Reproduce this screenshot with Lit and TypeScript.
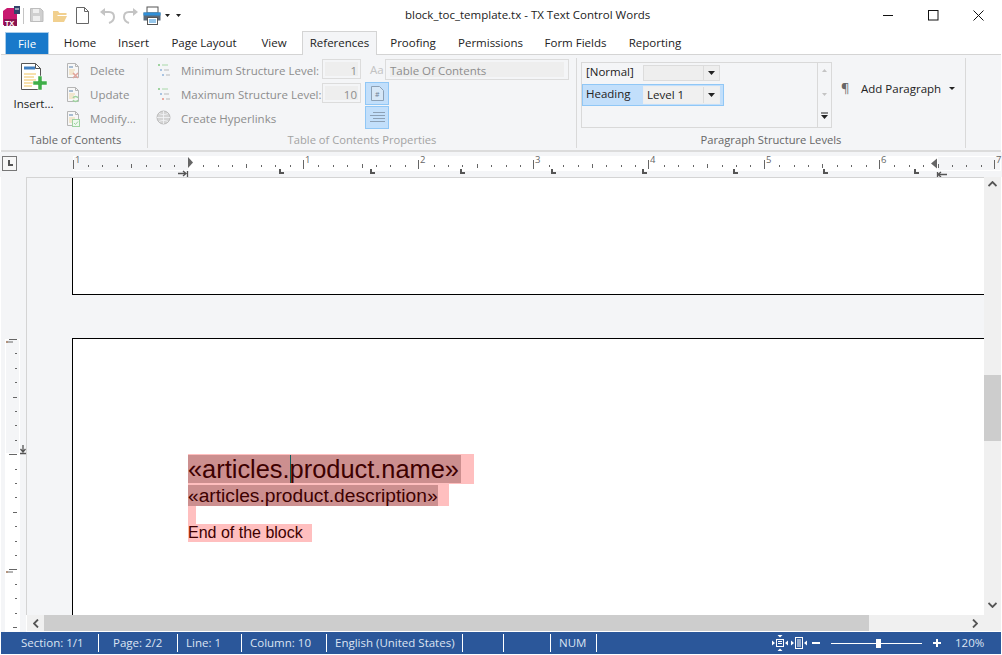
import { LitElement, html, svg, css } from 'lit';
import { customElement } from 'lit/decorators.js';

// name, width, gap before
const TABS: [string, number, number][] = [
  ['Home', 62, 0],
  ['Insert', 45, 0],
  ['Page Layout', 96, 0],
  ['View', 44, 0],
  ['References', 75, 6],
  ['Proofing', 72, 0],
  ['Permissions', 83, 0],
  ['Form Fields', 87, 0],
  ['Reporting', 72, 0],
];
const STATUS: [string, number][] = [
  ['Section: 1/1', 98],
  ['Page: 2/2', 79],
  ['Line: 1', 64],
  ['Column: 10', 85],
  ['English (United States)', 136],
  ['', 41],
  ['', 47],
  ['NUM', 46],
];

// small page icon used by the Delete / Update / Modify buttons
const pageIcon = (badge: unknown) => svg`
  <path d="M1.5 1.5h8l3 3v11h-11z" fill="#f7f7f7" stroke="#b5b5b5"/>
  <path d="M9.5 1.5v3h3" fill="none" stroke="#b5b5b5"/>
  <path d="M3 5h4" stroke="#a9bdd2" stroke-width="2"/>
  <path d="M3 8h6M3 10h5M3 12h6" stroke="#ecd5a5"/>
  ${badge}`;

const levelIcon = (third: string) => html`<svg width="16" height="15" viewBox="0 0 16 15">
  <path d="M2 2h2" stroke="#9fd3a0" stroke-width="2"/><path d="M6 2h6" stroke="#a8d8a8"/>
  <path d="M4 7h2" stroke="#aac4e2" stroke-width="2"/><path d="M8 7h5" stroke="#b9b9b9"/>
  <path d="M6 12h2" stroke="${third}" stroke-width="2"/><path d="M10 12h4" stroke="#b9b9b9"/>
</svg>`;

const caret = html`<svg width="7" height="4" viewBox="0 0 7 4"><path d="M0 0h7L3.5 4z" fill="#222"/></svg>`;

@customElement('app-root')
export class AppRoot extends LitElement {
  static styles = css`
    :host {
      display: flex;
      flex-direction: column;
      width: 1002px;
      height: 655px;
      overflow: hidden;
      background: #fff;
      font-family: "Open Sans", "Noto Sans", sans-serif;
      font-size: 11.5px;
      color: #222;
    }
    svg { display: block; flex: none; }

    .titlebar { display: flex; align-items: center; height: 31px; flex: none; }
    .qat { display: flex; align-items: center; width: 190px; padding-left: 3px; box-sizing: border-box; }
    .title { margin-left: 215px; margin-bottom: 2px; font-size: 11.5px; color: #222; white-space: nowrap; }
    .winctl { margin-left: auto; margin-right: 1px; display: flex; }
    .winbtn { width: 45px; height: 31px; display: flex; align-items: center; justify-content: center; }

    .tabs { display: flex; height: 23px; flex: none; position: relative; padding-left: 5px; }
    .file {
      width: 44px; background: #1979ca; color: #fff; display: flex; align-items: center;
      justify-content: center; margin-top: 1px; height: 22px; box-sizing: border-box;
      border: 1px solid #a9cdea; border-bottom: none;
    }
    .tab { display: flex; align-items: center; justify-content: center; box-sizing: border-box; height: 23px; padding-bottom: 1px; white-space: nowrap; }
    .tab.on {
      background: #f4f5f7; border: 1px solid #d4d4d4; border-bottom: none; height: 24px; padding-bottom: 2px; z-index: 1;
    }

    .ribbon {
      display: flex; height: 98px; flex: none; background: #f4f5f7; box-sizing: border-box;
      border-top: 1px solid #d4d4d4; border-bottom: 2px solid #dcdcdc; margin: 0 1px;
    }
    .group { display: flex; flex-direction: column; border-right: 1px solid #d9d9d9; height: 90px; margin-top: 3px; box-sizing: border-box; }
    .g1 { width: 147px; }
    .g2 { width: 429px; }
    .g3 { width: 389px; }
    .glabel { text-align: center; height: 17px; margin-top: auto; line-height: 17px; color: #666; font-size: 11.2px; }
    .glabel.off { color: #a3a3a3; }
    .g1 .glabel { padding-left: 3px; }
    .gbody { display: flex; flex: 1; min-height: 0; }

    .big { width: 65px; display: flex; flex-direction: column; align-items: center; padding-top: 4px; box-sizing: border-box; }
    .big span { margin-top: 3px; color: #222; }
    .smalls { display: flex; flex-direction: column; }
    .small { display: flex; align-items: center; height: 24px; color: #8d8d8d; white-space: nowrap; }
    .small svg { margin-right: 10px; }

    .g2body { display: grid; grid-template-columns: 166px 39px 4px 24px 180px; padding: 1px 0 0 8px; }
    .lv { display: flex; align-items: center; height: 24px; box-sizing: border-box; padding-bottom: 2px; color: #8d8d8d; white-space: nowrap; }
    .lv svg { margin-right: 9px; }
    .num {
      height: 20px; box-sizing: border-box; border: 1px solid #dcdcdc; padding: 2px; margin-bottom: 4px;
    }
    .num div { background: #eee; height: 100%; text-align: right; color: #8d8d8d; line-height: 18px; padding-right: 1px; }
    .col { display: flex; flex-direction: column; }
    .aa { color: #c2c2c2; height: 20px; line-height: 22px; margin-bottom: 3px; padding-left: 5px; }
    .tog {
      width: 24px; height: 23px; box-sizing: border-box; background: #c2dffb; border: 1px solid #90c7f6;
      display: flex; align-items: center; justify-content: center; margin-bottom: 1px;
    }
    .tocname { height: 21px; box-sizing: border-box; border: 1px solid #dcdcdc; padding: 2px 4px; width: 184px; margin-left: -4px; }
    .tocname div { background: #eee; height: 15px; line-height: 18px; color: #8d8d8d; }

    .g3body { display: flex; padding: 4px 0 0 4px; }
    .list { width: 251px; height: 66px; box-sizing: border-box; border: 1px solid #d9d9d9; display: flex; }
    .rows { flex: 1; padding-top: 2px; }
    .row { display: flex; align-items: center; height: 16px; padding-left: 4px; }
    .row .nm { width: 57px; padding-bottom: 4px; }
    .row.on {
      margin-top: 3px; height: 22px; width: 142px; box-sizing: border-box; background: #c2dffb;
      border: 1px solid #90c7f6; padding-left: 3px;
    }
    .combo { display: flex; width: 77px; height: 16px; box-sizing: border-box; border: 1px solid #dcdcdc; background: #eee; }
    .row.on .combo { border-color: #eee; height: 18px; background: #f0f0f0; }
    .combo .v { flex: 1; padding-left: 3px; line-height: 16px; }
    .combo .b { width: 15px; border-left: 1px solid #dcdcdc; display: flex; align-items: center; justify-content: center; }
    .lscroll { width: 13px; border-left: 1px solid #d9d9d9; display: flex; flex-direction: column; align-items: center; }
    .add { display: flex; align-items: center; height: 52px; margin-left: 9px; }
    .add .p { width: 20px; color: #666; font-size: 13px; }
    .add .a { width: 88px; white-space: nowrap; }

    .hruler { height: 25px; flex: none; background: #f4f5f7; }

    .main { flex: 1; min-height: 0; display: flex; margin: 0 1px; }
    .vruler { width: 25px; background: #f4f5f7; flex: none; }
    .center { flex: 1; min-width: 0; display: flex; flex-direction: column; }
    .docrow { flex: 1; min-height: 0; display: flex; }
    .doc {
      flex: 1; min-width: 0; overflow: hidden; background: #f4f5f7;
      border-top: 1px solid #d4d4d4; border-left: 1px solid #d4d4d4; padding-left: 45px;
    }
    .page { background: #fff; border: 1px solid #000; border-right: none; box-sizing: border-box; }
    .p1 { height: 117px; border-top: none; }
    .p2 { height: 400px; margin-top: 43px; padding: 115px 0 0 115px; }
    .line { display: block; width: max-content; background: #ffbfbf; font-family: "Liberation Sans", Arial, sans-serif; color: #3d0000; white-space: nowrap; }
    .line .sel { display: block; background: #cc8f8f; }
    .l1 { font-size: 25.4px; height: 30px; padding: 1px 13px 1px 0; box-sizing: border-box; }
    .l1 .sel { height: 28px; line-height: 27px; padding-right: 2px; }
    .l2 { font-size: 19.2px; height: 22px; padding: 1px 11px 0 0; box-sizing: border-box; }
    .l2 .sel { height: 21px; line-height: 21px; }
    .l3 { height: 18px; width: 8px; }
    .l4 { font-size: 16px; line-height: 18px; height: 18px; padding-right: 9px; }
    .cursor { display: inline-block; width: 1px; height: 28px; margin-right: -1px; background: #0f5f5f; vertical-align: bottom; }

    .vscroll { width: 17px; flex: none; background: #f0f0f0; display: flex; flex-direction: column; align-items: center; padding-top: 4px; box-sizing: border-box; }
    .vthumb { width: 17px; height: 66px; background: #cdcdcd; margin: 188px 0 161px; flex: none; }
    .hscroll { height: 16px; flex: none; background: #f0f0f0; display: flex; align-items: center; margin-left: 1px; margin-bottom: 1px; }
    .hthumb { width: 825px; height: 16px; background: #cdcdcd; }
    .harrow { display: flex; align-items: center; justify-content: center; flex: none; height: 16px; }
    .harrow.l { width: 17px; }
    .harrow.r { width: 115px; justify-content: flex-end; padding-right: 6px; box-sizing: border-box; }

    .status {
      height: 22px; flex: none; background: #2b579a; color: #dbe4f2; display: flex; align-items: center;
      margin: 0 1px 1px;
    }
    .cell { box-sizing: border-box; height: 18px; line-height: 18px; border-right: 1px solid #fff; padding-left: 8px; white-space: nowrap; }
    .cell:nth-child(1) { padding-left: 20px; }
    .cell:nth-child(2) { padding-left: 14px; }
    .zoom { display: flex; align-items: center; margin-left: 175px; }
    .track { width: 91px; height: 1px; background: #fff; margin: 0 11px; position: relative; }
    .thumb { position: absolute; left: 45px; top: -4px; width: 5px; height: 9px; background: #fff; }
    .pct { margin-left: 14px; padding-bottom: 2px; }
  `;

  private renderHRuler() {
    const ticks = [];
    for (let i = -8; i < 56; i++) {
      const x = 188.7 + i * 14.4;
      if (x < 75 || x > 1000) continue;
      if (i % 8 === 0) continue;
      const h = i % 4 === 0 ? 4 : 2;
      ticks.push(svg`<rect x="${Math.round(x)}" y="${14 - h / 2}" width="1" height="${h}" fill="#666"/>`);
    }
    const inches: [number, string][] = [[74, '1'], [304, '1'], [419, '2'], [534, '3'], [649, '4'], [765, '5'], [880, '6'], [995, '7']];
    const tabs = [280, 371, 461, 552, 643, 734, 824, 915];
    return html`<div class="hruler"><svg width="1002" height="25" viewBox="0 0 1002 25">
      <rect x="2.5" y="4.5" width="14" height="14" fill="#f7f7f7" stroke="#777"/>
      <path d="M8 8v6h5v-2H10V8z" fill="#555"/>
      <rect x="73" y="4" width="928" height="15" fill="#fff"/>
      <rect x="74" y="5" width="114" height="13" fill="#f4f5f7"/>
      <rect x="938" y="5" width="62" height="13" fill="#f4f5f7"/>
      ${ticks}
      ${inches.map(([x, t]) => svg`<rect x="${x - 1}" y="8" width="1" height="9" fill="#666"/>
        <text x="${x + 1}" y="11" font-family="Open Sans" font-size="9.5" fill="#666">${t}</text>`)}
      ${tabs.map((x) => svg`<path d="M${x - 1} 17h2v3h3v2h-5z" fill="#555"/>`)}
      <path d="M188 5l5 5.500-5 5.500z" fill="#666"/>
      <path d="M178 21.500h7M183 19l3 2.500-3 2.500M187.500 19v6" fill="none" stroke="#555" stroke-width="1.300"/>
      <path d="M937 6.500l-6 5 6 5z" fill="#666"/>
      <path d="M947 22.500h-8M941 20l-3 2.500 3 2.500M937.500 20v6" fill="none" stroke="#555" stroke-width="1.300"/>
    </svg></div>`;
  }

  private renderVRuler() {
    const ticks = [];
    for (let i = 0; i < 21; i++) {
      const y = 162 + i * 14.4;
      const w = i % 8 === 0 ? 8 : i % 4 === 0 ? 4 : 2;
      ticks.push(svg`<rect x="${16 - w}" y="${Math.round(y)}" width="${w}" height="1" fill="#666"/>`);
    }
    return html`<div class="vruler"><svg width="25" height="455" viewBox="0 0 25 455">
      <rect x="4" y="162" width="15" height="293" fill="#fff"/>
      <rect x="5" y="163" width="13" height="113" fill="#f4f5f7"/>
      ${ticks}
      <path d="M5 165h7" stroke="#666"/><path d="M5 165h2" stroke="#b5794a"/>
      <path d="M5 395h7" stroke="#666"/><path d="M5 395h2" stroke="#b5794a"/>
      <path d="M22 268v7M19.500 272l2.500 3 2.500-3M19 276.500h6" fill="none" stroke="#555" stroke-width="1.300"/>
    </svg></div>`;
  }

  render() {
    return html`
      <div class="titlebar">
        <div class="qat">
          <svg width="184" height="22" viewBox="0 0 184 22">
            <path d="M0 6l4-3h10v17H0z" fill="#c8186f"/>
            <rect x="11" y="1" width="6" height="8" fill="#33446b"/>
            <path d="M12 4h4" stroke="#fff"/>
            <rect x="1" y="14" width="13" height="7" fill="#8a1450"/>
            <text x="2" y="20.5" font-family="Open Sans" font-size="7.5" font-weight="700" fill="#fff">TX</text>
            <path d="M20.500 3v16" stroke="#c4c4c4"/>
            <path d="M27.500 3.500h10l2.500 2.500v10.500h-12.500z" fill="#cfcfcf" stroke="#bdbdbd"/>
            <rect x="30" y="4" width="6" height="4" fill="#eee"/><rect x="30" y="11" width="7" height="5" fill="#eee"/>
            <path d="M50 17V6h5l1.500 2h7v2H55l-1 1h10l-3 6z" fill="#f1d08f"/>
            <path d="M73.500 2.500h8l4 4v12h-12z" fill="#fff" stroke="#666"/>
            <path d="M81.500 2.500v4h4" fill="none" stroke="#666"/>
            <path d="M101 7h5c3.500 0 5 2.500 5 5s-2 5-5 6" fill="none" stroke="#c4c4c4" stroke-width="2"/>
            <path d="M97 7l5-4v8z" fill="#c4c4c4"/>
            <path d="M131 7h-5c-3.500 0-5 2.500-5 5s2 5 5 6" fill="none" stroke="#c4c4c4" stroke-width="2"/>
            <path d="M135 7l-5-4v8z" fill="#c4c4c4"/>
            <rect x="144" y="2" width="11" height="6" fill="#fff" stroke="#555"/>
            <rect x="140.500" y="7.500" width="17" height="8" fill="#5b6a7a"/>
            <rect x="140.500" y="7.500" width="17" height="3" fill="#2f8fd8"/>
            <rect x="144.500" y="12.500" width="10" height="7" fill="#fff" stroke="#555"/>
            <path d="M146 15h7M146 17h7" stroke="#2f8fd8"/>
            <path d="M162 9h5l-2.500 3z M173 9h5l-2.500 3z" fill="#222"/>
            <path d="M184.500 3v16" stroke="#c4c4c4"/>
          </svg>
        </div>
        <div class="title">block_toc_template.tx - TX Text Control Words</div>
        <div class="winctl">
          <div class="winbtn"><svg width="11" height="11"><path d="M0 5.500h10" stroke="#111"/></svg></div>
          <div class="winbtn"><svg width="11" height="11"><rect x=".5" y=".5" width="9.500" height="9.500" fill="none" stroke="#111"/></svg></div>
          <div class="winbtn"><svg width="11" height="11"><path d="M.5.500l10 10M10.500.500l-10 10" stroke="#111"/></svg></div>
        </div>
      </div>

      <div class="tabs">
        <div class="file">File</div>
        ${TABS.map(([name, w, gap]) => html`<div class="tab ${name === 'References' ? 'on' : ''}" style="width:${w}px;margin-left:${gap}px">${name}</div>`)}
      </div>

      <div class="ribbon">
        <div class="group g1">
          <div class="gbody">
            <div class="big">
              <svg width="28" height="31" viewBox="0 0 28 31">
                <path d="M1.500 1.500h14l5 5v21h-19z" fill="#fff" stroke="#555"/>
                <path d="M15.500 1.500v5h5" fill="none" stroke="#555"/>
                <path d="M4 6h11" stroke="#3f7fc1" stroke-width="3"/>
                <path d="M4 12h12M4 15h10M4 18h12M4 21h9M4 24h8" stroke="#f0c25d"/>
                <path d="M18 14h4v5h5v4h-5v5h-4v-5h-5v-4h5z" fill="#3fae49" stroke="#fff" stroke-width=".5"/>
              </svg>
              <span>Insert...</span>
            </div>
            <div class="smalls">
              <div class="small"><svg width="14" height="17" viewBox="0 0 14 17">${pageIcon(svg`<path d="M7 11l5 5M12 11l-5 5" stroke="#e0a49c" stroke-width="1.500"/>`)}</svg>Delete</div>
              <div class="small"><svg width="14" height="17" viewBox="0 0 14 17">${pageIcon(svg`<path d="M7 12c1-2 4-2 5 0M12 14c-1 2-4 2-5 0" fill="none" stroke="#9fd3a0" stroke-width="1.500"/>`)}</svg>Update</div>
              <div class="small"><svg width="14" height="17" viewBox="0 0 14 17">${pageIcon(svg`<rect x="6.500" y="9.500" width="7" height="7" fill="#eff8ef" stroke="#9fd3a0"/><path d="M8 13l1.500 1.500L12 11.500" fill="none" stroke="#9fd3a0"/>`)}</svg>Modify...</div>
            </div>
          </div>
          <div class="glabel">Table of Contents</div>
        </div>

        <div class="group g2">
          <div class="g2body gbody">
            <div class="col">
              <div class="lv">${levelIcon('#aac4e2')}Minimum Structure Level:</div>
              <div class="lv">${levelIcon('#eaa9a0')}Maximum Structure Level:</div>
              <div class="lv">
                <svg width="16" height="16" viewBox="0 0 16 16"><circle cx="7.500" cy="7.500" r="6.500" fill="#d4d4d4" stroke="#bcbcbc"/><path d="M1 7.500h13M7.500 1v13M3 3.500c3 1.500 6 1.500 9 0M3 11.500c3-1.500 6-1.500 9 0" fill="none" stroke="#f4f5f7" stroke-width=".8"/></svg>
                Create Hyperlinks
              </div>
            </div>
            <div class="col">
              <div class="num"><div>1</div></div>
              <div class="num"><div>10</div></div>
            </div>
            <div></div>
            <div class="col">
              <div class="aa">Aa</div>
              <div class="tog"><svg width="13" height="15" viewBox="0 0 13 15"><path d="M.5.500h8l4 4v10H.5z" fill="#d6e7f7" stroke="#8ca0b5"/><text x="4" y="11" font-family="Open Sans" font-size="7" fill="#6f8296">#</text></svg></div>
              <div class="tog"><svg width="15" height="11" viewBox="0 0 15 11"><path d="M3 .500h12M0 3.500h15M3 6.500h12M0 9.500h15" stroke="#8ca0b5"/></svg></div>
            </div>
            <div class="tocname"><div>Table Of Contents</div></div>
          </div>
          <div class="glabel off">Table of Contents Properties</div>
        </div>

        <div class="group g3">
          <div class="g3body gbody">
            <div class="list">
              <div class="rows">
                <div class="row"><span class="nm">[Normal]</span>
                  <div class="combo"><div class="v"></div><div class="b">${caret}</div></div></div>
                <div class="row on"><span class="nm">Heading</span>
                  <div class="combo"><div class="v">Level 1</div><div class="b">${caret}</div></div></div>
              </div>
              <div class="lscroll">
                <svg width="9" height="60" viewBox="0 0 9 60">
                  <path d="M2 9l2.500-3L7 9z" fill="#c4c4c4"/>
                  <path d="M2 30l2.500 3L7 30z" fill="#c4c4c4"/>
                  <path d="M1 50h7" stroke="#222"/><path d="M1 52h7l-3.500 4z" fill="#222"/>
                </svg>
              </div>
            </div>
            <div class="add">
              <span class="p">¶</span>
              <span class="a">Add Paragraph</span>
              <svg width="6" height="3" viewBox="0 0 6 3"><path d="M0 0h6L3 3z" fill="#222"/></svg>
            </div>
          </div>
          <div class="glabel">Paragraph Structure Levels</div>
        </div>
      </div>

      ${this.renderHRuler()}

      <div class="main">
        ${this.renderVRuler()}
        <div class="center">
          <div class="docrow">
            <div class="doc">
              <div class="page p1"></div>
              <div class="page p2">
                <div class="line l1"><span class="sel">«articles.<span class="cursor"></span>product.name»</span></div>
                <div class="line l2"><span class="sel">«articles.product.description»</span></div>
                <div class="line l3"></div>
                <div class="line l4">End of the block</div>
              </div>
            </div>
            <div class="vscroll">
              <svg width="9" height="6" viewBox="0 0 9 6"><path d="M.5 5L4.500 1l4 4" fill="none" stroke="#555" stroke-width="1.800"/></svg>
              <div class="vthumb"></div>
              <svg width="9" height="6" viewBox="0 0 9 6"><path d="M.5 1l4 4 4-4" fill="none" stroke="#555" stroke-width="1.800"/></svg>
            </div>
          </div>
          <div class="hscroll">
            <div class="harrow l"><svg width="6" height="9" viewBox="0 0 6 9"><path d="M5 .5L1 4.500l4 4" fill="none" stroke="#555" stroke-width="1.800"/></svg></div>
            <div class="hthumb"></div>
            <div class="harrow r"><svg width="6" height="9" viewBox="0 0 6 9"><path d="M1 .5l4 4-4 4" fill="none" stroke="#555" stroke-width="1.800"/></svg></div>
          </div>
        </div>
      </div>

      <div class="status">
        ${STATUS.map(([t, w]) => html`<div class="cell" style="width:${w}px">${t}</div>`)}
        <div class="zoom">
          <svg width="35" height="16" viewBox="0 0 35 16">
            <rect x="4.500" y="4.500" width="7" height="7" fill="none" stroke="#fff"/><path d="M6 6.500h4M6 8.500h4" stroke="#fff"/>
            <path d="M3 8L0 5.500v5zM13 8l3-2.500v5zM8 2.500L5.500 0h5zM8 13.500L5.500 16h5z" fill="#fff"/>
            <rect x="23.500" y="2.500" width="7" height="11" fill="none" stroke="#fff"/><path d="M25 5h4M25 7h4M25 9h4M25 11h4" stroke="#fff"/>
            <path d="M22 8l-3-2.500v5zM32 8l3-2.500v5z" fill="#fff"/>
          </svg>
          <svg style="margin-left:5px" width="8" height="8" viewBox="0 0 8 8"><path d="M0 4h8" stroke="#fff" stroke-width="2"/></svg>
          <div class="track"><div class="thumb"></div></div>
          <svg width="8" height="8" viewBox="0 0 8 8"><path d="M0 4h8M4 0v8" stroke="#fff" stroke-width="2"/></svg>
          <span class="pct">120%</span>
        </div>
      </div>
    `;
  }
}
